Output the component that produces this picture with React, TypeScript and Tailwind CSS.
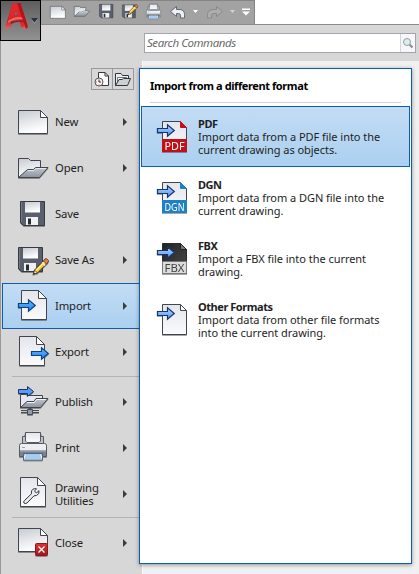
import type { ReactNode } from "react";

function Defs() {
  return (
    <svg className="absolute h-0 w-0" aria-hidden="true">
      <defs>
        <linearGradient id="paper" x1="0" y1="0" x2="0.3" y2="1">
          <stop offset="0" stopColor="#c6cbd2" />
          <stop offset="1" stopColor="#ffffff" />
        </linearGradient>
        <linearGradient id="sheet" x1="0" y1="0" x2="0" y2="1">
          <stop offset="0" stopColor="#e4e5ec" />
          <stop offset="1" stopColor="#fbfbfc" />
        </linearGradient>
        <linearGradient id="steel" x1="0" y1="0" x2="0" y2="1">
          <stop offset="0" stopColor="#c2c8d1" />
          <stop offset="1" stopColor="#8c939e" />
        </linearGradient>
        <linearGradient id="blue" x1="0" y1="0" x2="0" y2="1">
          <stop offset="0" stopColor="#6db8ff" />
          <stop offset="1" stopColor="#1b7ff0" />
        </linearGradient>
        <linearGradient id="softblue" x1="0" y1="0" x2="0" y2="1">
          <stop offset="0" stopColor="#b9d8ff" />
          <stop offset="1" stopColor="#4a92f2" />
        </linearGradient>
        <linearGradient id="red" x1="0" y1="0" x2="0" y2="1">
          <stop offset="0" stopColor="#e03232" />
          <stop offset="1" stopColor="#a01820" />
        </linearGradient>
        <linearGradient id="dark" x1="0" y1="0" x2="1" y2="1">
          <stop offset="0" stopColor="#222222" />
          <stop offset="1" stopColor="#4c4c4c" />
        </linearGradient>
        <linearGradient id="leg" x1="0" y1="0" x2="0" y2="1">
          <stop offset="0" stopColor="#d81f26" />
          <stop offset="0.7" stopColor="#c2222a" />
          <stop offset="1" stopColor="#e8675f" />
        </linearGradient>
      </defs>
    </svg>
  );
}

function Icon({ children }: { children: ReactNode }) {
  return (
    <svg
      width="32"
      height="32"
      viewBox="0 0 32 32"
      className="block shrink-0 overflow-visible drop-shadow-[0_1px_0.5px_rgba(0,0,0,0.35)]"
    >
      {children}
    </svg>
  );
}

const INK = "#41454d";

const WidePage = () => (
  <>
    <path d="M1.5 4.5H23.5L30.5 11.5V27.5H1.5Z" fill="url(#paper)" stroke={INK} />
    <path d="M23.5 4.5V11.5H30.5Z" fill="#fff" stroke={INK} />
  </>
);

const FolderIcon = () => (
  <>
    <path d="M1.5 25.5V6.5H11.5L13.5 8.5H23.5V17" fill="url(#paper)" stroke={INK} />
    <path d="M1.5 25.5L10.5 17.5H16.5L18.5 15.5H31L22.5 25.5Z" fill="url(#steel)" stroke={INK} />
    <path d="M11 18.5H17L19 16.5H29" stroke="#e5e8ed" fill="none" />
  </>
);

const Disk = () => (
  <>
    <path d="M3.5 3.5H27.5V27.5H6.5L3.5 24.5Z" fill="#59606b" stroke="#343942" />
    <path d="M4.5 4V24" stroke="#747b86" />
    <path d="M8 4H23V14.5H8Z" fill="url(#paper)" />
    <path d="M9 19H21V27H9Z" fill="#f0f1f3" />
    <path d="M11 20.5H14V26.5H11Z" fill="#282d35" />
  </>
);

const Pencil = () => (
  <>
    <path d="M17.5 26L27.3 16.2L30.3 19.2L20.5 29L16.5 30Z" fill="#ffc629" stroke="#3d3024" />
    <path d="M18.5 27L28.3 17.2" stroke="#fff2a8" strokeWidth="1.2" />
    <path d="M26.5 17L28 14.8Q30 14 31.5 16.5Q32 17.5 29.5 20Z" fill="#e9793d" stroke="#4b3932" strokeWidth=".8" />
    <path d="M25 18.5L28 21.5" stroke="#e5e8ec" strokeWidth="1.5" />
    <path d="M17.5 26L20.5 29L16.5 30Z" fill="#ffeed2" stroke="#3d3024" strokeWidth=".8" />
    <path d="M16 30.5L17.5 29" stroke="#1d1d1d" />
  </>
);

function Arrow({ x, y, soft = false }: { x: number; y: number; soft?: boolean }) {
  return (
    <g transform={`translate(${x} ${y})`}>
      <path
        d="M.5 4.5H10.5V.8L17.3 6.5L10.5 12.2V8.5H.5Z"
        fill={soft ? "url(#softblue)" : "url(#blue)"}
        stroke={soft ? "#15356f" : "#074581"}
        strokeWidth="1.2"
      />
    </g>
  );
}

function TallPage({ x, y }: { x: number; y: number }) {
  return (
    <g transform={`translate(${x} ${y})`}>
      <path d="M.5 .5H17.5L25.5 8.5V29.5H.5Z" fill="url(#sheet)" stroke={INK} />
      <path d="M17.5 .5V8.5H25.5Z" fill="#fff" stroke={INK} />
    </g>
  );
}

const PrinterIcon = () => (
  <>
    <path d="M2.5 13.5Q2.5 11.5 4.5 11.5H27.5Q29.5 11.5 29.5 13.5V24.5H2.5Z" fill="#eeeef2" stroke="#555b65" />
    <path d="M3 19H29V24H3Z" fill="#7c838e" />
    <path d="M3 18H29V19.5H3Z" fill="#a8adb5" />
    <path d="M5.5 11.5V4.5H8L8.5 .5H23.5L24 4.5H26.5V11.5Z" fill="#bfc2c9" stroke="#555b65" />
    <path d="M8.5 .5H23.5V9L22 10.5H10L8.5 9Z" fill="url(#sheet)" stroke="#555b65" />
    <path d="M5 15.5H8" stroke="#9ea3ab" />
    <path d="M8.5 21.5H23.5L25.5 27.5H6.5Z" fill="#a5cdf3" stroke="#fff" />
    <path d="M6.5 28V21.5H25.5V28Z" fill="none" stroke="#4b6787" />
  </>
);

const PublishIcon = () => (
  <>
    <path d="M3.5 21.5V8.5H8.5L10.5 9.5H25.5V14" fill="#e7e8ef" stroke={INK} />
    <path d="M3.5 21.5L10 15.5H17L19 12.5H31L23.5 21.5Z" fill="url(#steel)" stroke={INK} />
    <path d="M10 16.5H17.5L19.5 13.5H29" stroke="#f2f3f5" fill="none" />
    <path d="M4 25.5H22M13 22V28" stroke="#454b55" strokeWidth="3" />
    <path d="M4 25.5H22M13 23V27.5" stroke="#c9ced5" strokeWidth="1" />
    <path d="M10.5 23.5H15.5V28.5H10.5Z" fill="#929aa5" stroke="#454b55" />
    <path
      d="M1.5 3.5H10.5V.6L16.5 5.5L10.5 10.4V7.5H1.5Z"
      fill="#559eff"
      stroke="#17345d"
    />
  </>
);

const UtilitiesIcon = () => (
  <>
    <TallPage x={3} y={-1} />
    <path
      d="M7.5 22.5L14.5 15.8Q13.8 11.5 17.5 10.6L19.5 10.8L17.5 13L19.3 15L22 12.7Q22.8 16 19.5 17.5L17 17.8L10 25Q8 26.3 7 25Q6 24 7.5 22.5Z"
      fill="#ececf0"
      stroke="#30343b"
    />
  </>
);

const CloseIcon = () => (
  <>
    <g transform="translate(0 -3)">
      <WidePage />
    </g>
    <rect x="18.5" y="16.5" width="12" height="12" rx="1" fill="url(#red)" stroke="#8d1818" />
    <path d="M21.5 19.5L27.5 25.5M27.5 19.5L21.5 25.5" stroke="#fff" strokeWidth="1.3" />
  </>
);

function FormatIcon({ kind }: { kind: string }) {
  const isFbx = kind === "FBX";
  const color = kind === "PDF" ? "#c40f16" : kind === "DGN" ? "#1e80c5" : isFbx ? "#dcdcdc" : "#ffffff";
  const border = isFbx ? "#2b2b2b" : INK;
  return (
    <Icon>
      <path d="M5.5 1.5H23.5L29.5 7.5V31.5H5.5Z" fill={isFbx ? "url(#dark)" : "url(#sheet)"} stroke={border} />
      <path d="M23.5 1.5V7.5H29.5Z" fill={isFbx ? "#777" : color} stroke={kind === "" ? INK : isFbx ? "#222" : color} />
      {kind !== "" && (
        <>
          <rect x="5" y="19" width="25" height="13" fill={color} />
          {isFbx && <rect x="5.5" y="19.5" width="24" height="12" fill="none" stroke="#777" />}
          <text
            x="17.5"
            y="29.5"
            textAnchor="middle"
            textLength="20"
            lengthAdjust="spacingAndGlyphs"
            fontFamily="Noto Sans"
            fontSize="11.5"
            fill={isFbx ? "#444" : "#fff"}
          >
            {kind}
          </text>
        </>
      )}
      <Arrow x={0} y={4} soft />
    </Icon>
  );
}

function NavItem({
  label,
  arrow = true,
  active = false,
  icon,
}: {
  label: ReactNode;
  arrow?: boolean;
  active?: boolean;
  icon: ReactNode;
}) {
  return (
    <div
      className={
        active
          ? "ml-px flex h-[46px] items-center border border-[#0d5eb0] bg-linear-to-b from-[#c3dcf4] to-[#abd0f0] pl-[14px]"
          : "flex h-[46px] items-center pl-4"
      }
    >
      <Icon>{icon}</Icon>
      <span className="ml-[6px] w-[68px] pb-px text-[11.3px] leading-[13px] tracking-[-0.15px]">{label}</span>
      {arrow && (
        <svg width="4" height="8" className="block">
          <path d="M0 0L4 4L0 8Z" fill="#3c3c3c" />
        </svg>
      )}
    </div>
  );
}

const Separator = ({ tight = false }: { tight?: boolean }) => (
  <div className={tight ? "h-[3px] pl-[11px]" : "h-1 pt-px pl-[11px]"}>
    <div className="h-px bg-[#b3b3b3]" />
  </div>
);

function FormatItem({ kind, title, children, active = false }: { kind: string; title: string; children: ReactNode; active?: boolean }) {
  return (
    <div
      className={
        active
          ? "flex h-[61px] border border-[#0d5eb0] bg-linear-to-b from-[#c3dcf4] to-[#abd0f0] pt-[10px] pl-[15px]"
          : "flex h-[61px] pt-[11px] pl-4"
      }
    >
      <div className="mt-[3px]">
        <FormatIcon kind={kind} />
      </div>
      <div className="ml-[9px] text-[11px] leading-[13px] whitespace-nowrap text-[#1e1e1e]">
        <div className="font-bold tracking-[-0.45px]">{title}</div>
        <div className="tracking-[-0.04px]">{children}</div>
      </div>
    </div>
  );
}

function Toolbar() {
  return (
    <svg width="214" height="24" viewBox="41 0 214 24" className="block">
      <g transform="translate(49.5 4) scale(.52)">
        <WidePage />
      </g>
      <g transform="translate(73.5 3) scale(.52)">
        <FolderIcon />
      </g>
      <g transform="translate(97.5 2.4) scale(.56)">
        <Disk />
      </g>
      <g transform="translate(120.5 3) scale(.54)">
        <Disk />
      </g>
      <g transform="translate(117.4 -5) scale(.65)">
        <Pencil />
      </g>
      <g transform="translate(145 4) scale(.53)">
        <PrinterIcon />
      </g>
      <path d="M170.5 11.5L176.5 6.5V9.5H180Q184.5 10 184.5 14.5V18H180.5V15.5Q180.5 13.5 178.5 13.5H176.5V16.5Z" fill="#eef0f3" stroke="#626974" />
      <path d="M193 10H198L195.5 13Z" fill="#fff" />
      <path d="M222.5 11.5L216.5 6.5V9.5H213Q207.5 10 207.5 14.5V18H211.5V15.5Q211.5 13.5 213.5 13.5H216.5V16.5Z" fill="#adadad" stroke="#898989" />
      <path d="M230 10H235L232.5 13Z" fill="#d3d3d3" />
      <path d="M242 8.5H250V10H242ZM242 11.5H250L246 15.5Z" fill="#fff" />
    </svg>
  );
}

function AppButton() {
  return (
    <div className="absolute top-0 left-0 h-[41px] w-[41px] border border-black bg-linear-to-b from-[#5e5e5e] to-[#929292]">
      <svg width="39" height="39" viewBox="1 1 39 39" className="block">
        <path d="M12.5 3H20.5L28 27L26 29L21.5 27.5L16 9.5L11 26.5L7.5 29L5 28Z" fill="url(#leg)" />
        <path d="M16.5 3H20.5L28 27L26 29Z" fill="#b4151c" />
        <path d="M12.5 3H17L24 26L21.5 27.5L16 9.5L13.5 18L8 22Z" fill="#e5262c" />
        <path d="M9.5 17.5Q15 13.5 21 15L22.5 20Q14 18.5 7 24Z" fill="#d8242a" />
        <path d="M8.5 20.5Q15 15.5 22 17.5L22.6 19.5Q14 18 7.5 23.5Z" fill="#ef6b63" />
        <path d="M11 22Q16 19.5 22.6 20.5L23 22Q16 21 11 24Z" fill="#9d141b" />
        <path d="M31 18H38L34.5 22.5Z" fill="#2a3340" />
        <path d="M32 20.5L34.5 23.3L37.5 19.5" fill="none" stroke="#b5b5b5" strokeWidth=".5" />
      </svg>
    </div>
  );
}

export default function App() {
  return (
    <div className="relative flex h-[574px] w-[419px] flex-col overflow-hidden bg-[#d7d7d7] font-['Noto_Sans','Open_Sans',sans-serif] text-[#222]">
      <Defs />
      <header className="flex h-[25px] shrink-0 border-b border-[#8c8c8c] bg-white">
        <div className="w-[255px] border-t border-r border-[#858585] bg-[#a2a2a2] pl-[41px]">
          <div className="-mt-px">
            <Toolbar />
          </div>
        </div>
      </header>
      <AppButton />

      <div className="h-9 shrink-0 border-l border-[#999] pt-2 pl-[143px]">
        <div className="flex h-5 w-[272px] border border-[#a4a4ae] bg-white">
          <span className="grow pl-[2px] text-[11.5px] leading-[18px] tracking-[-0.45px] text-[#6c6c6c] italic">Search Commands</span>
          <div className="flex w-[15px] items-center justify-center border-l border-[#d5d5dc] bg-[#f7f7f7]">
            <svg width="12" height="12" viewBox="0 0 12 12">
              <path d="M7.5 7.5L10.5 10.5" stroke="#8a9090" strokeWidth="2.2" />
              <circle cx="5" cy="5" r="3.5" fill="#d9eeee" stroke="#969d9d" />
            </svg>
          </div>
        </div>
      </div>

      <div className="flex grow">
        <nav className="w-[142px] shrink-0 border-l border-[#999]">
          <div className="flex h-[38px] pt-[7px] pl-[90px]">
            <div className="flex h-[22px] w-[22px] items-center justify-center border border-[#999]">
              <svg width="18" height="18" viewBox="0 0 18 18">
                <path d="M5.5 8V2.5H12L15.5 6V15.5H8" fill="#fafafb" stroke="#33373d" />
                <path d="M12 2.5V6H15.5" fill="none" stroke="#33373d" />
                <circle cx="6" cy="12" r="4" fill="#f7f0ee" stroke="#555" />
                <path d="M6 9.5V12H8" fill="none" stroke="#333" />
                <path d="M2.8 12H4M6 14.5V15.5M9 12H9.8" stroke="#d66" />
              </svg>
            </div>
            <div className="flex h-[22px] w-[21px] items-center justify-center border border-l-0 border-[#999]">
              <svg width="18" height="18" viewBox="0 0 18 18">
                <path d="M1.5 15.5V3.5H7L8.5 5.5H14.5V9" fill="#eceded" stroke="#33373d" />
                <path d="M3.5 13V7.5H12.5V9" fill="#fff" stroke="#777" />
                <path d="M1.5 15.5L5 9.5H8L9.5 8.5H16.5L13.5 15.5Z" fill="#cdd1d6" stroke="#33373d" />
              </svg>
            </div>
          </div>
          <div className="w-[139px]">
            <NavItem label="New" icon={<WidePage />} />
            <NavItem label="Open" icon={<FolderIcon />} />
            <NavItem label="Save" arrow={false} icon={<Disk />} />
            <NavItem
              label="Save As"
              icon={
                <>
                  <g transform="translate(-2 0)">
                    <Disk />
                  </g>
                  <Pencil />
                </>
              }
            />
            <NavItem
              label="Import"
              active
              icon={
                <>
                  <TallPage x={4} y={0} />
                  <Arrow x={1} y={9} />
                </>
              }
            />
            <NavItem
              label="Export"
              icon={
                <>
                  <TallPage x={2} y={0} />
                  <Arrow x={14} y={11} />
                </>
              }
            />
            <Separator />
            <NavItem label="Publish" icon={<PublishIcon />} />
            <NavItem label="Print" icon={<PrinterIcon />} />
            <NavItem
              label={
                <>
                  Drawing
                  <br />
                  Utilities
                </>
              }
              icon={<UtilitiesIcon />}
            />
            <Separator tight />
            <NavItem label="Close" icon={<CloseIcon />} />
          </div>
        </nav>
        <main className="grow border-l border-[#fafafa] bg-[#f0f0f0]" />
      </div>

      <section className="absolute top-[68px] left-[139px] h-[496px] w-[273px] border border-[#0d5eb0] bg-white pt-[9px] shadow-[0_1px_4px_rgba(0,0,0,0.4)]">
        <h1 className="h-6 pl-[10px] text-[11px] leading-[15px] font-bold tracking-[-0.4px] text-black">Import from a different format</h1>
        <div className="mr-[10px] mb-[4px] ml-[10px] h-px bg-[#d2d2d6]" />
        <div className="mx-px -mt-px">
          <FormatItem kind="PDF" title="PDF" active>
            Import data from a PDF file into the
            <br />
            current drawing as objects.
          </FormatItem>
          <FormatItem kind="DGN" title="DGN">
            Import data from a DGN file into the
            <br />
            current drawing.
          </FormatItem>
          <FormatItem kind="FBX" title="FBX">
            Import a FBX file into the current
            <br />
            drawing.
          </FormatItem>
          <FormatItem kind="" title="Other Formats">
            Import data from other file formats
            <br />
            into the current drawing.
          </FormatItem>
        </div>
      </section>
    </div>
  );
}
